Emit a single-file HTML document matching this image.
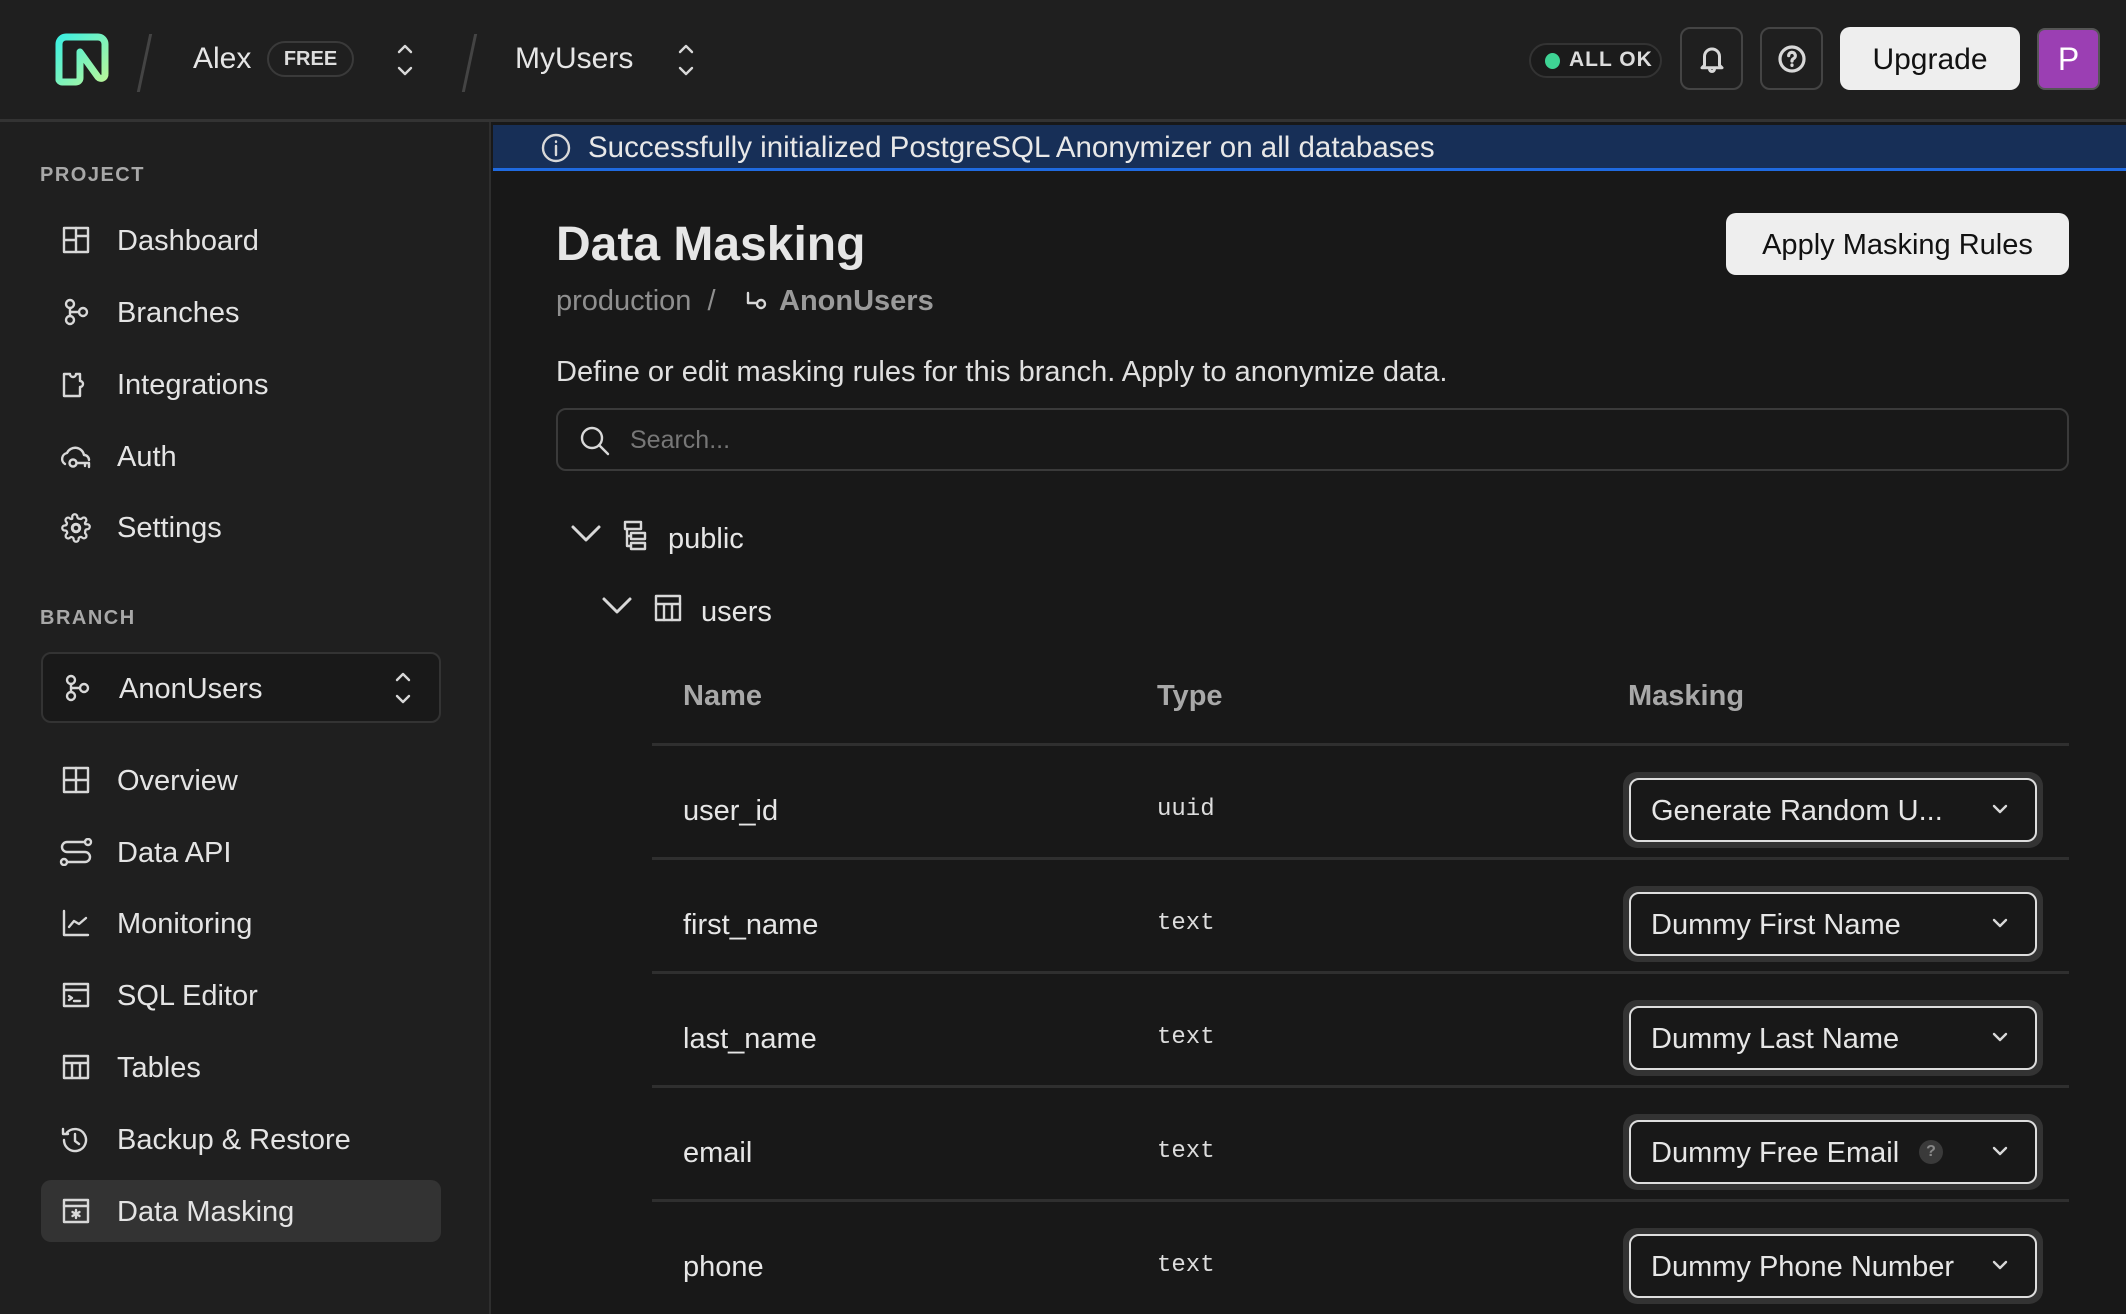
<!DOCTYPE html>
<html><head><meta charset="utf-8"><style>
*{box-sizing:border-box;margin:0;padding:0}
body{width:2126px;height:1314px;overflow:hidden;background:#181818;font-family:"Liberation Sans",sans-serif;color:#e6e6e6;position:relative}
.a{position:absolute;white-space:nowrap}
svg{position:absolute;fill:none;stroke:#d8d8d8;stroke-width:2.4;stroke-linecap:round;stroke-linejoin:round}
.hdr{left:0;top:0;width:2126px;height:122px;background:#1f1f1f;border-bottom:3px solid #333}
.side{left:0;top:122px;width:491px;height:1192px;background:#1f1f1f;border-right:2px solid #2e2e2e}
.nav{font-size:29px;color:#e4e4e4;left:117px;line-height:40px}
.sec{font-size:20px;color:#a8a8a8;letter-spacing:1.5px;left:40px;font-weight:bold}
.btn{border:2px solid #444;border-radius:10px}
.sel{left:1623px;width:420px;height:76px;border-radius:14px;background:#333;padding:6px}
.sel div{width:100%;height:100%;border:2px solid #ddd;border-radius:10px;background:#181818;font-size:29px;padding-left:20px;line-height:62px;position:relative}
.hl{left:652px;width:1417px;height:3px;background:#2f2f2f}
.cn{left:683px;font-size:29px;line-height:40px}
.ct{left:1157px;font-family:"Liberation Mono",monospace;font-size:24px;line-height:40px;color:#ddd}
</style></head><body>
<div class="a hdr"></div>
<svg style="left:54px;top:32px" width="56" height="56" viewBox="0 0 56 56"><defs><linearGradient id="g" x1="0" y1="0" x2="1" y2="1"><stop offset="0" stop-color="#3ef0e0"/><stop offset="1" stop-color="#b7f59a"/></linearGradient></defs><path d="M5 48V12a7 7 0 0 1 7-7h32a7 7 0 0 1 7 7v30a4 4 0 0 1-7 3L26 20v26a4 4 0 0 1-4 4H9a4 4 0 0 1-4-2z" stroke="url(#g)" stroke-width="7" fill="none"/></svg>
<div class="a" style="left:143px;top:34px;width:3px;height:58px;background:#444;transform:skewX(-12deg)"></div>
<div class="a" style="left:193px;top:42px;font-size:30px;color:#e6e6e6">Alex</div>
<div class="a" style="left:267px;top:41px;width:87px;height:36px;border:2px solid #3a3a3a;border-radius:18px;font-size:20px;font-weight:bold;text-align:center;line-height:33px;color:#ddd">FREE</div>
<svg style="left:395px;top:42px" width="20" height="36" viewBox="0 0 20 36"><path d="M4 10l6-6 6 6M4 26l6 6 6-6"/></svg>
<div class="a" style="left:468px;top:34px;width:3px;height:58px;background:#444;transform:skewX(-12deg)"></div>
<div class="a" style="left:515px;top:42px;font-size:30px">MyUsers</div>
<svg style="left:676px;top:42px" width="20" height="36" viewBox="0 0 20 36"><path d="M4 10l6-6 6 6M4 26l6 6 6-6"/></svg>
<div class="a" style="left:1529px;top:43px;width:133px;height:35px;border:2px solid #333;border-radius:18px;background:#1b1b1b"></div>
<div class="a" style="left:1545px;top:53px;width:15px;height:16px;border-radius:50%;background:#3ed394"></div>
<div class="a" style="left:1569px;top:48px;font-size:21px;font-weight:bold;letter-spacing:1px;color:#ddd">ALL OK</div>
<div class="a btn" style="left:1680px;top:27px;width:63px;height:63px"></div>
<svg style="left:1697px;top:44px" width="30" height="30" viewBox="0 0 24 24"><path d="M6 17V10a6 6 0 0 1 12 0v7l2 2H4z M10 20a2 2 0 0 0 4 0"/></svg>
<div class="a btn" style="left:1760px;top:27px;width:63px;height:63px"></div>
<svg style="left:1776px;top:43px" width="32" height="32" viewBox="0 0 24 24"><circle cx="12" cy="12" r="9"/><path d="M9.5 9.5a2.5 2.5 0 1 1 3.5 2.3c-.7.4-1 .9-1 1.7M12 16.5v.3"/></svg>
<div class="a" style="left:1840px;top:27px;width:180px;height:63px;background:#eee;border-radius:10px;color:#111;font-size:30px;text-align:center;line-height:65px">Upgrade</div>
<div class="a" style="left:2037px;top:28px;width:63px;height:62px;background:#9b3fb3;border:2px solid #555;border-radius:8px;color:#fff;font-size:32px;text-align:center;line-height:58px">P</div>

<div class="a side"></div>
<div class="a sec" style="top:164px">PROJECT</div>
<svg style="left:62px;top:226px" width="28" height="28" viewBox="0 0 28 28"><rect x="2" y="2" width="24" height="24"/><path d="M14 2v24M2 14h12M14 10h12"/></svg>
<div class="a nav" style="top:221px">Dashboard</div>
<svg style="left:62px;top:298px" width="28" height="28" viewBox="0 0 28 28"><circle cx="8" cy="6" r="4"/><circle cx="8" cy="22" r="4"/><circle cx="21" cy="14" r="4"/><path d="M8 10v8M8 14h9"/></svg>
<div class="a nav" style="top:293px">Branches</div>
<svg style="left:62px;top:370px" width="28" height="28" viewBox="0 0 28 28"><path d="M2 4h6a3 3 0 0 0 6 0h4v7a3 3 0 0 1 0 6v9H2z"/></svg>
<div class="a nav" style="top:365px">Integrations</div>
<svg style="left:59px;top:442px" width="32" height="28" viewBox="0 0 32 28"><path d="M6 22a6 6 0 0 1 2-11 9 9 0 0 1 17 2 5 5 0 0 1 5 5"/><circle cx="14" cy="21" r="3.5"/><path d="M17.5 21H30v4M26 21v3"/></svg>
<div class="a nav" style="top:437px">Auth</div>
<svg style="left:61px;top:513px" width="30" height="30" viewBox="0 0 24 24"><circle cx="12" cy="12" r="3"/><path d="M19.4 15a1.65 1.65 0 0 0 .33 1.82l.06.06a2 2 0 1 1-2.830 2.83l-.06-.06a1.65 1.65 0 0 0-2.82 1.17V21a2 2 0 1 1-4 0v-.09A1.65 1.65 0 0 0 9 19.4a1.65 1.65 0 0 0-1.82.33l-.06.06a2 2 0 1 1-2.83-2.83l.06-.06A1.65 1.65 0 0 0 3.1 14H3a2 2 0 1 1 0-4h.09A1.65 1.65 0 0 0 4.6 9a1.65 1.650 0 0 0-.33-1.82l-.06-.06a2 2 0 1 1 2.83-2.83l.06.06A1.65 1.65 0 0 0 9 4.6V3a2 2 0 1 1 4 0v.09A1.65 1.65 0 0 0 15 4.6a1.65 1.65 0 0 0 1.82-.33l.06-.06a2 2 0 1 1 2.83 2.83l-.06.06A1.65 1.65 0 0 0 19.4 9H21a2 2 0 1 1 0 4h-.09a1.65 1.65 0 0 0-1.51 1z" style="stroke-width:1.8"/></svg>
<div class="a nav" style="top:508px">Settings</div>
<div class="a sec" style="top:607px">BRANCH</div>
<div class="a" style="left:41px;top:652px;width:400px;height:71px;border:2px solid #333;border-radius:10px;background:#191919"></div>
<svg style="left:63px;top:674px" width="28" height="28" viewBox="0 0 28 28"><circle cx="8" cy="6" r="4"/><circle cx="8" cy="22" r="4"/><circle cx="21" cy="14" r="4"/><path d="M8 10v8M8 14h9"/></svg>
<div class="a nav" style="left:119px;top:669px">AnonUsers</div>
<svg style="left:393px;top:670px" width="20" height="36" viewBox="0 0 20 36"><path d="M4 10l6-6 6 6M4 26l6 6 6-6"/></svg>
<div class="a" style="left:41px;top:1180px;width:400px;height:62px;background:#333;border-radius:10px"></div>
<svg style="left:62px;top:766px" width="28" height="28" viewBox="0 0 28 28"><rect x="2" y="2" width="24" height="24"/><path d="M14 2v24M2 14h24"/></svg>
<div class="a nav" style="top:761px">Overview</div>
<svg style="left:59px;top:838px" width="34" height="28" viewBox="0 0 34 28"><circle cx="29" cy="4" r="3"/><circle cx="5" cy="24" r="3"/><path d="M26 4H8a5 5 0 0 0 0 10h18a5 5 0 0 1 0 10H8"/></svg>
<div class="a nav" style="top:833px">Data API</div>
<svg style="left:62px;top:909px" width="28" height="28" viewBox="0 0 28 28"><path d="M2 2v24h24M7 18l5-6 5 3 7-6"/></svg>
<div class="a nav" style="top:904px">Monitoring</div>
<svg style="left:62px;top:981px" width="28" height="28" viewBox="0 0 28 28"><rect x="2" y="3" width="24" height="22"/><path d="M2 9h24M7 15l3 2-3 2M12 20h6"/></svg>
<div class="a nav" style="top:976px">SQL Editor</div>
<svg style="left:62px;top:1053px" width="28" height="28" viewBox="0 0 28 28"><rect x="2" y="3" width="24" height="22"/><path d="M2 10h24M10 10v15M18 10v15"/></svg>
<div class="a nav" style="top:1048px">Tables</div>
<svg style="left:60px;top:1125px" width="30" height="30" viewBox="0 0 30 30"><path d="M4 15a11 11 0 1 0 3-7.5M3 4v5h5M15 9v7l4 3"/></svg>
<div class="a nav" style="top:1120px">Backup &amp; Restore</div>
<svg style="left:62px;top:1197px" width="28" height="28" viewBox="0 0 28 28"><rect x="2" y="3" width="24" height="22"/><path d="M2 9h24M14 13v8M10.5 15l7 4M17.5 15l-7 4"/></svg>
<div class="a nav" style="top:1192px">Data Masking</div>

<div class="a" style="left:493px;top:125px;width:1633px;height:46px;background:#172f57;border-bottom:3px solid #1f6ae0"></div>
<svg style="left:540px;top:132px" width="32" height="32" viewBox="0 0 32 32"><circle cx="16" cy="16" r="13"/><path d="M16 14v9M16 9.5v.5"/></svg>
<div class="a" style="left:588px;top:131px;font-size:29.5px;color:#e8e8e8">Successfully initialized PostgreSQL Anonymizer on all databases</div>

<div class="a" style="left:556px;top:217px;font-size:48px;font-weight:bold;color:#e6e6e6">Data Masking</div>
<div class="a" style="left:556px;top:285px;font-size:29px;color:#8f8f8f">production &nbsp;/</div>
<svg style="left:744px;top:290px" width="26" height="26" viewBox="0 0 26 26"><path d="M4 3v10h8"/><circle cx="17" cy="14" r="4"/></svg>
<div class="a" style="left:779px;top:285px;font-size:29px;color:#9a9a9a;font-weight:bold">AnonUsers</div>
<div class="a" style="left:1726px;top:213px;width:343px;height:62px;background:#eee;border-radius:10px;color:#111;font-size:29px;text-align:center;line-height:64px">Apply Masking Rules</div>
<div class="a" style="left:556px;top:356px;font-size:29px;color:#e0e0e0">Define or edit masking rules for this branch. Apply to anonymize data.</div>
<div class="a" style="left:556px;top:408px;width:1513px;height:63px;border:2px solid #3a3a3a;border-radius:10px"></div>
<svg style="left:578px;top:424px" width="34" height="34" viewBox="0 0 34 34"><circle cx="14" cy="14" r="10"/><path d="M21 21l9 9"/></svg>
<div class="a" style="left:630px;top:426px;font-size:25px;color:#777">Search...</div>

<svg style="left:570px;top:524px" width="32" height="20" viewBox="0 0 32 20"><path d="M3 3l13 13 13-13" style="stroke-width:3"/></svg>
<svg style="left:623px;top:520px" width="26" height="32" viewBox="0 0 26 32"><rect x="2" y="2" width="16" height="7"/><rect x="8" y="13" width="14" height="6"/><rect x="8" y="23" width="14" height="6"/><path d="M4 9v17h4M4 16h4"/></svg>
<div class="a" style="left:668px;top:523px;font-size:29px">public</div>
<svg style="left:601px;top:596px" width="32" height="20" viewBox="0 0 32 20"><path d="M3 3l13 13 13-13" style="stroke-width:3"/></svg>
<svg style="left:654px;top:594px" width="28" height="28" viewBox="0 0 28 28"><rect x="2" y="2" width="24" height="24"/><path d="M2 10h24M10 10v16M18 10v16"/></svg>
<div class="a" style="left:701px;top:596px;font-size:29px">users</div>

<div class="a" style="left:683px;top:680px;font-size:29px;font-weight:bold;color:#a8a8a8">Name</div>
<div class="a" style="left:1157px;top:680px;font-size:29px;font-weight:bold;color:#a8a8a8">Type</div>
<div class="a" style="left:1628px;top:680px;font-size:29px;font-weight:bold;color:#a8a8a8">Masking</div>
<div class="a hl" style="top:743px"></div>
<div class="a hl" style="top:857px"></div>
<div class="a hl" style="top:971px"></div>
<div class="a hl" style="top:1085px"></div>
<div class="a hl" style="top:1199px"></div>

<div class="a cn" style="top:791px">user_id</div><div class="a ct" style="top:790px">uuid</div>
<div class="a cn" style="top:905px">first_name</div><div class="a ct" style="top:904px">text</div>
<div class="a cn" style="top:1019px">last_name</div><div class="a ct" style="top:1018px">text</div>
<div class="a cn" style="top:1133px">email</div><div class="a ct" style="top:1132px">text</div>
<div class="a cn" style="top:1247px">phone</div><div class="a ct" style="top:1246px">text</div>

<div class="a sel" style="top:772px"><div>Generate Random U...</div></div>
<div class="a sel" style="top:886px"><div>Dummy First Name</div></div>
<div class="a sel" style="top:1000px"><div>Dummy Last Name</div></div>
<div class="a sel" style="top:1114px"><div>Dummy Free Email<span style="position:absolute;left:288px;top:18px;width:24px;height:24px;border-radius:50%;background:#3a3a3a;color:#888;font-size:16px;font-weight:bold;line-height:24px;text-align:center">?</span></div></div>
<div class="a sel" style="top:1228px"><div>Dummy Phone Number</div></div>
<svg style="left:1991px;top:803px" width="18" height="12" viewBox="0 0 18 12"><path d="M3 3l6 6 6-6"/></svg>
<svg style="left:1991px;top:917px" width="18" height="12" viewBox="0 0 18 12"><path d="M3 3l6 6 6-6"/></svg>
<svg style="left:1991px;top:1031px" width="18" height="12" viewBox="0 0 18 12"><path d="M3 3l6 6 6-6"/></svg>
<svg style="left:1991px;top:1145px" width="18" height="12" viewBox="0 0 18 12"><path d="M3 3l6 6 6-6"/></svg>
<svg style="left:1991px;top:1259px" width="18" height="12" viewBox="0 0 18 12"><path d="M3 3l6 6 6-6"/></svg>
</body></html>
